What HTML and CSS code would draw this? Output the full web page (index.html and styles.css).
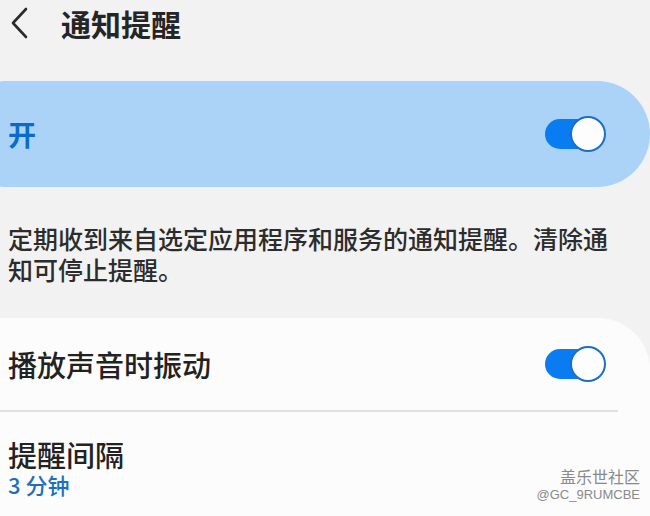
FILE: index.html
```html
<!DOCTYPE html>
<html lang="zh-CN">
<head>
    <meta charset="UTF-8">
    <meta name="viewport" content="width=device-width, initial-scale=1.0">
    <title>通知提醒</title>
    <link rel="stylesheet" href="styles.css">
</head>
<body>
    <header class="topbar">
        <svg class="back" width="20" height="32" viewBox="0 0 20 32">
            <path d="M16 2 L3 16 L16 30" fill="none" stroke="#2b2b2b" stroke-width="2.6" stroke-linecap="round" stroke-linejoin="round"/>
        </svg>
        <h1>通知提醒</h1>
    </header>

    <div class="master">
        <span class="master-label">开</span>
        <span class="switch"><span class="knob"></span></span>
    </div>

    <p class="desc">定期收到来自选定应用程序和服务的通知提醒。清除通知可停止提醒。</p>

    <div class="card">
        <div class="row">
            <span class="row-title">播放声音时振动</span>
            <span class="switch"><span class="knob"></span></span>
        </div>
        <div class="divider"></div>
        <div class="row row-sub">
            <span class="row-title">提醒间隔</span>
            <span class="row-value">3 分钟</span>
        </div>
    </div>

    <div class="watermark">
        <div class="wm-name">盖乐世社区</div>
        <div class="wm-id">@GC_9RUMCBE</div>
    </div>
</body>
</html>
```

FILE: styles.css
```css
* {
    margin: 0;
    padding: 0;
    box-sizing: border-box;
}

body {
    font-family: "Noto Sans CJK SC", "Noto Sans", sans-serif;
    background-color: #f2f2f2;
    color: #262626;
    width: 650px;
    height: 516px;
    overflow: hidden;
    position: relative;
}

.topbar {
    display: flex;
    align-items: center;
    height: 46px;
    padding-left: 10px;
}

.back {
    display: block;
}

.topbar h1 {
    font-size: 30px;
    font-weight: 700;
    line-height: 46px;
    margin-left: 31px;
    color: #252525;
}

.master {
    display: flex;
    align-items: center;
    justify-content: space-between;
    height: 106px;
    margin-top: 35px;
    margin-left: -12px;
    padding-left: 20px;
    padding-right: 44px;
    background-color: #abd3f8;
    border-radius: 16px 53px 53px 16px;
}

.master-label {
    font-size: 28px;
    font-weight: 700;
    color: #0b6bc9;
}

.switch {
    position: relative;
    display: block;
    width: 61px;
    height: 30px;
}

.switch::before {
    content: "";
    position: absolute;
    left: 0;
    top: 0;
    width: 48px;
    height: 30px;
    border-radius: 15px;
    background-color: #0a7cf2;
}

.knob {
    position: absolute;
    right: 0;
    top: -3px;
    width: 36px;
    height: 36px;
    border-radius: 50%;
    background-color: #fdfdfd;
    border: 2px solid #1c6ec9;
}

.desc {
    margin-top: 36px;
    padding-left: 8px;
    width: 630px;
    font-size: 25px;
    line-height: 31px;
    font-weight: 500;
    color: #2c2c2c;
}

.card {
    margin-top: 33px;
    margin-left: -20px;
    padding-left: 28px;
    background-color: #fcfcfc;
    border-radius: 24px 52px 0 0;
    height: 220px;
}

.row {
    display: flex;
    align-items: center;
    justify-content: space-between;
    height: 92px;
    padding-right: 44px;
}

.row-title {
    font-size: 29px;
    font-weight: 500;
    color: #222;
}

.divider {
    height: 2px;
    background-color: #e1e1e1;
    margin-left: -8px;
    margin-right: 32px;
}

.row-sub {
    flex-direction: column;
    align-items: flex-start;
    justify-content: flex-start;
    padding-top: 26px;
}

.row-sub .row-title {
    line-height: 32px;
}

.row-value {
    font-size: 22px;
    font-weight: 500;
    line-height: 26px;
    margin-top: 1px;
    color: #1a6fc2;
}

.watermark {
    position: absolute;
    right: 10px;
    bottom: 12px;
    text-align: right;
    color: #8a8a8a;
}

.wm-name {
    font-size: 16px;
    line-height: 20px;
}

.wm-id {
    font-family: "Liberation Sans", sans-serif;
    font-size: 13px;
    line-height: 18px;
}
```
